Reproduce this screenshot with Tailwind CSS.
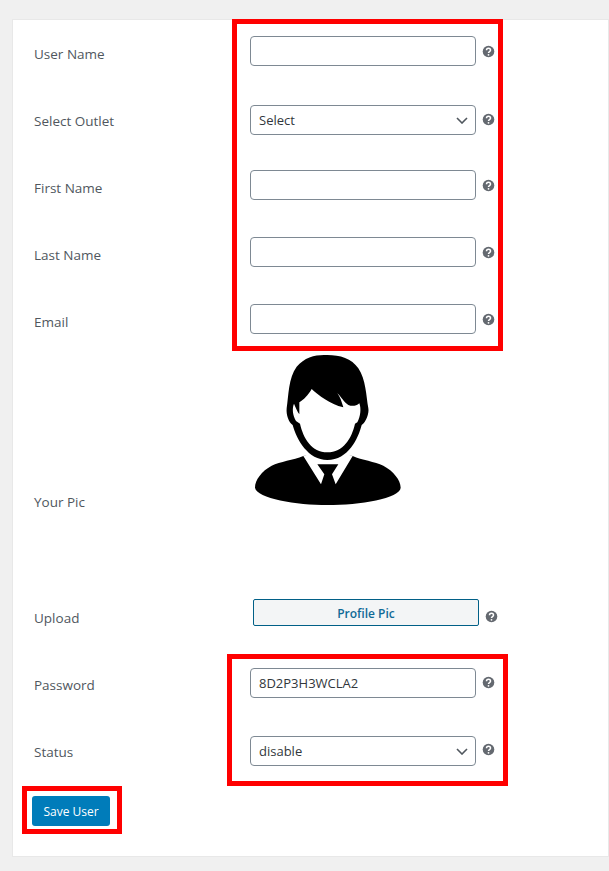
<!DOCTYPE html>
<html lang="en">
<head>
    <meta charset="UTF-8">
    <title>Add User</title>
    <script src="https://cdn.jsdelivr.net/npm/@tailwindcss/browser@4"></script>
</head>
<body class="bg-[#f0f0f0] h-[871px] overflow-hidden relative font-['Open_Sans','Noto_Sans',sans-serif] text-[#50575e]">
    <form class="ml-[12px] mt-[19px] w-[597px] h-[838px] bg-white border border-[#e8e8e8] pl-[21px] pt-[16px]">
        <!-- User Name -->
        <div class="flex items-start h-[69px]">
            <label class="w-[216px] pt-[8px] leading-[20px] text-[13.5px]">User Name</label>
            <input type="text" class="w-[226px] h-[30px] bg-white border border-[#7e8993] rounded-[4px] px-2 text-[13px] text-[#32373c]">
            <svg class="ml-[6px] mt-[9px] w-[13px] h-[13px]" viewBox="0 0 13 13"><circle cx="6.5" cy="6.5" r="5.8" fill="#646970"/><path d="M4.5 5.2c0-2.6 4-2.6 4 0 0 1.4-2 1.4-2 2.8" fill="none" stroke="#fff" stroke-width="1.5"/><circle cx="6.5" cy="9.8" r="0.9" fill="#fff"/></svg>
        </div>
        <!-- Select Outlet -->
        <div class="flex items-start h-[65px]">
            <label class="w-[216px] pt-[6px] leading-[20px] text-[13.5px]">Select Outlet</label>
            <div class="relative w-[226px] h-[30px]">
                <select class="w-full h-full appearance-none bg-white border border-[#7e8993] rounded-[4px] pl-2 pt-[1px] text-[13px] text-[#32373c]"><option>Select</option></select>
                <svg class="absolute right-[8px] top-[12px] w-[12px] h-[7px]" viewBox="0 0 12 7"><path d="M1 1l5 5 5-5" fill="none" stroke="#50575e" stroke-width="1.6"/></svg>
            </div>
            <svg class="ml-[6px] mt-[8px] w-[13px] h-[13px]" viewBox="0 0 13 13"><circle cx="6.5" cy="6.5" r="5.8" fill="#646970"/><path d="M4.5 5.2c0-2.6 4-2.6 4 0 0 1.4-2 1.4-2 2.8" fill="none" stroke="#fff" stroke-width="1.5"/><circle cx="6.5" cy="9.8" r="0.9" fill="#fff"/></svg>
        </div>
        <!-- First Name -->
        <div class="flex items-start h-[67px]">
            <label class="w-[216px] pt-[8px] leading-[20px] text-[13.5px]">First Name</label>
            <input type="text" class="w-[226px] h-[30px] bg-white border border-[#7e8993] rounded-[4px] px-2 text-[13px] text-[#32373c]">
            <svg class="ml-[6px] mt-[9px] w-[13px] h-[13px]" viewBox="0 0 13 13"><circle cx="6.5" cy="6.5" r="5.8" fill="#646970"/><path d="M4.5 5.2c0-2.6 4-2.6 4 0 0 1.4-2 1.4-2 2.8" fill="none" stroke="#fff" stroke-width="1.5"/><circle cx="6.5" cy="9.8" r="0.9" fill="#fff"/></svg>
        </div>
        <!-- Last Name -->
        <div class="flex items-start h-[67px]">
            <label class="w-[216px] pt-[8px] leading-[20px] text-[13.5px]">Last Name</label>
            <input type="text" class="w-[226px] h-[30px] bg-white border border-[#7e8993] rounded-[4px] px-2 text-[13px] text-[#32373c]">
            <svg class="ml-[6px] mt-[9px] w-[13px] h-[13px]" viewBox="0 0 13 13"><circle cx="6.5" cy="6.5" r="5.8" fill="#646970"/><path d="M4.5 5.2c0-2.6 4-2.6 4 0 0 1.4-2 1.4-2 2.8" fill="none" stroke="#fff" stroke-width="1.5"/><circle cx="6.5" cy="9.8" r="0.9" fill="#fff"/></svg>
        </div>
        <!-- Email -->
        <div class="flex items-start h-[41px]">
            <label class="w-[216px] pt-[8px] leading-[20px] text-[13.5px]">Email</label>
            <input type="email" class="w-[226px] h-[30px] bg-white border border-[#7e8993] rounded-[4px] px-2 text-[13px] text-[#32373c]">
            <svg class="ml-[6px] mt-[9px] w-[13px] h-[13px]" viewBox="0 0 13 13"><circle cx="6.5" cy="6.5" r="5.8" fill="#646970"/><path d="M4.5 5.2c0-2.6 4-2.6 4 0 0 1.4-2 1.4-2 2.8" fill="none" stroke="#fff" stroke-width="1.5"/><circle cx="6.5" cy="9.8" r="0.9" fill="#fff"/></svg>
        </div>
        <!-- Your Pic -->
        <div class="flex items-start h-[254px]">
            <label class="w-[206px] pt-[147px] leading-[20px] text-[13.5px]">Your Pic</label>
            <svg class="w-[180px] h-[170px]" viewBox="0 0 540 510">
                <path d="M190 333C160 345 120 350 95 362C65 378 45 405 45 428C50 460 170 480 262 480C360 480 480 460 482 428C482 405 460 378 430 362C405 350 365 345 338 333L262 320Z" fill="#000"/>
                <path d="M190 333L243 418L253 388L232 358L295 358L276 388L287 418L338 333L262 310Z" fill="#fff"/>
                <path d="M140 190C146 150 145 100 170 65C195 35 230 28 262 30C300 30 335 40 355 70C378 105 378 150 385 190C388 205 378 232 365 240C355 280 325 345 262 345C205 345 170 285 158 240C146 232 138 210 140 190Z" fill="#000"/>
                <path d="M178 172C190 165 205 150 215 132C235 150 270 178 310 187C305 170 300 155 292 145C303 155 312 172 325 180C335 184 348 184 358 175C364 190 362 215 352 232L345 236C335 280 310 322 262 322C215 322 190 280 180 236L168 228C158 210 156 190 162 176C168 190 172 200 178 208Z" fill="#fff"/>
            </svg>
        </div>
        <!-- Upload -->
        <div class="flex items-start h-[69px]">
            <label class="w-[216px] pt-[9px] leading-[20px] text-[13.5px]">Upload</label>
            <button type="button" class="ml-[3px] w-[226px] h-[27px] pt-[2px] bg-[#f3f5f6] border border-[#016087] rounded-[2px] text-[12px] font-semibold text-[#0f6a96]">Profile Pic</button>
            <svg class="ml-[6px] mt-[11px] w-[13px] h-[13px]" viewBox="0 0 13 13"><circle cx="6.5" cy="6.5" r="5.8" fill="#646970"/><path d="M4.5 5.2c0-2.6 4-2.6 4 0 0 1.4-2 1.4-2 2.8" fill="none" stroke="#fff" stroke-width="1.5"/><circle cx="6.5" cy="9.8" r="0.9" fill="#fff"/></svg>
        </div>
        <!-- Password -->
        <div class="flex items-start h-[68px]">
            <label class="w-[216px] pt-[7px] leading-[20px] text-[13.5px]">Password</label>
            <input type="text" value="8D2P3H3WCLA2" class="w-[226px] h-[30px] bg-white border border-[#7e8993] rounded-[4px] px-2 text-[13px] text-[#32373c]">
            <svg class="ml-[6px] mt-[8px] w-[13px] h-[13px]" viewBox="0 0 13 13"><circle cx="6.5" cy="6.5" r="5.8" fill="#646970"/><path d="M4.5 5.2c0-2.6 4-2.6 4 0 0 1.4-2 1.4-2 2.8" fill="none" stroke="#fff" stroke-width="1.5"/><circle cx="6.5" cy="9.8" r="0.9" fill="#fff"/></svg>
        </div>
        <!-- Status -->
        <div class="flex items-start h-[60px]">
            <label class="w-[216px] pt-[6px] leading-[20px] text-[13.5px]">Status</label>
            <div class="relative w-[226px] h-[30px]">
                <select class="w-full h-full appearance-none bg-white border border-[#7e8993] rounded-[4px] pl-2 pt-[1px] text-[13px] text-[#32373c]"><option>disable</option></select>
                <svg class="absolute right-[8px] top-[12px] w-[12px] h-[7px]" viewBox="0 0 12 7"><path d="M1 1l5 5 5-5" fill="none" stroke="#50575e" stroke-width="1.6"/></svg>
            </div>
            <svg class="ml-[6px] mt-[7px] w-[13px] h-[13px]" viewBox="0 0 13 13"><circle cx="6.5" cy="6.5" r="5.8" fill="#646970"/><path d="M4.5 5.2c0-2.6 4-2.6 4 0 0 1.4-2 1.4-2 2.8" fill="none" stroke="#fff" stroke-width="1.5"/><circle cx="6.5" cy="9.8" r="0.9" fill="#fff"/></svg>
        </div>
        <button type="submit" class="-ml-[2px] w-[78px] h-[30px] pt-[1px] bg-[#007cba] rounded-[3px] text-[12px] text-white">Save User</button>
    </form>

    <!-- red annotation boxes -->
    <div class="absolute left-[232px] top-[19px] w-[271px] h-[332px] border-[5px] border-[#ff0000]"></div>
    <div class="absolute left-[227px] top-[654px] w-[281px] h-[132px] border-[5px] border-[#ff0000]"></div>
    <div class="absolute left-[22px] top-[786px] w-[100px] h-[48px] border-[5px] border-[#ff0000]"></div>
</body>
</html>
